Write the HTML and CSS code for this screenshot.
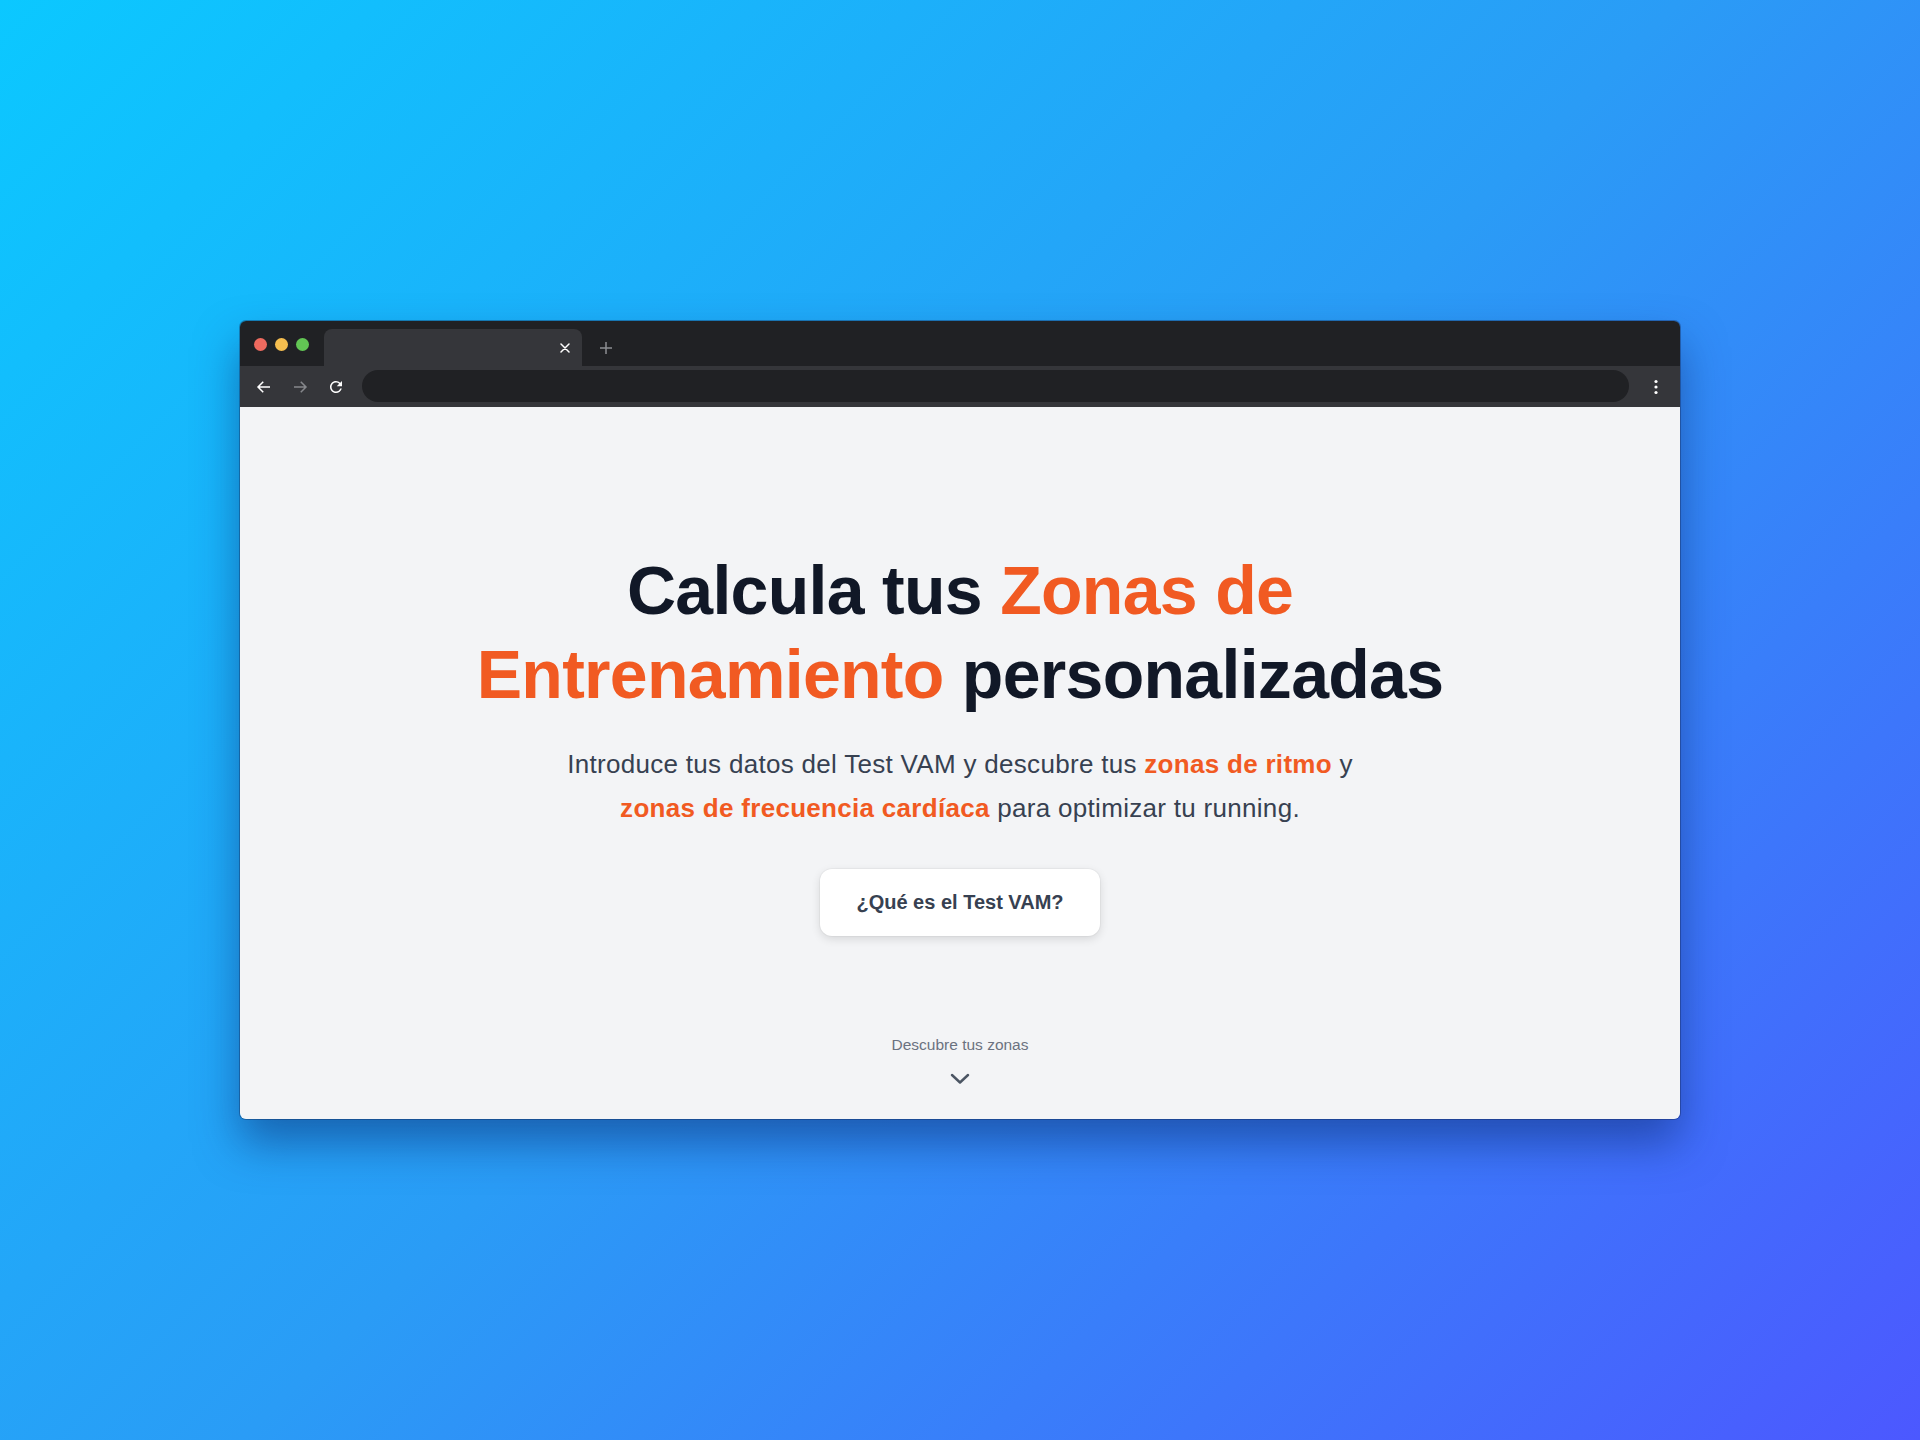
FILE: index.html
```html
<!DOCTYPE html>
<html lang="es">
<head>
<meta charset="utf-8">
<title>Zonas de Entrenamiento</title>
<link rel="stylesheet" href="styles.css">
</head>
<body>
<div class="window">
  <div class="titlebar">
    <div class="lights">
      <span class="light red"></span>
      <span class="light yellow"></span>
      <span class="light green"></span>
    </div>
    <div class="tab">
      <svg class="tab-close" width="10" height="10" viewBox="0 0 10 10"><path d="M1 1L9 9M9 1L1 9" stroke="#ffffff" stroke-width="1.5" stroke-linecap="round"/></svg>
    </div>
    <svg class="new-tab" width="14" height="14" viewBox="0 0 14 14"><path d="M7 1V13M1 7H13" stroke="#8c8e92" stroke-width="1.5"/></svg>
  </div>
  <div class="toolbar">
    <svg class="nav-icon" width="18" height="18" viewBox="0 0 24 24"><path d="M20 12H4M11 5l-7 7 7 7" fill="none" stroke="#ffffff" stroke-width="2"/></svg>
    <svg class="nav-icon" width="18" height="18" viewBox="0 0 24 24"><path d="M4 12h16M13 5l7 7-7 7" fill="none" stroke="#86888c" stroke-width="2"/></svg>
    <svg class="nav-icon" width="18" height="18" viewBox="0 0 24 24"><path fill="#ffffff" d="M17.65 6.35A7.958 7.958 0 0 0 12 4c-4.42 0-7.990 3.58-7.99 8s3.57 8 7.99 8c3.73 0 6.84-2.55 7.73-6h-2.08A5.99 5.99 0 0 1 12 18c-3.310 0-6-2.690-6-6s2.690-6 6-6c1.66 0 3.14.69 4.22 1.78L13 11h7V4l-2.35 2.35z"/></svg>
    <div class="address"></div>
    <svg class="menu" width="4" height="16" viewBox="0 0 4 16"><circle cx="2" cy="2.5" r="1.6" fill="#fff"/><circle cx="2" cy="8" r="1.6" fill="#fff"/><circle cx="2" cy="13.5" r="1.6" fill="#fff"/></svg>
  </div>
  <main class="content">
    <h1 class="title">Calcula tus <span class="accent">Zonas de</span> <span class="accent">Entrenamiento</span> personalizadas</h1>
    <p class="lead">Introduce tus datos del Test VAM y descubre tus <strong class="accent">zonas de ritmo</strong> y <strong class="accent">zonas de frecuencia cardíaca</strong> para optimizar tu running.</p>
    <button class="cta" type="button">¿Qué es el Test VAM?</button>
    <div class="hint">
      <span class="hint-text">Descubre tus zonas</span>
      <svg class="chevron" width="20" height="11" viewBox="0 0 20 11"><path d="M2 2l8 7.5L18 2" fill="none" stroke="#4b5563" stroke-width="2.4" stroke-linecap="round" stroke-linejoin="round"/></svg>
    </div>
  </main>
</div>
</body>
</html>
```

FILE: styles.css
```css
html, body {
  margin: 0;
  padding: 0;
}
body {
  width: 1920px;
  height: 1440px;
  display: flex;
  align-items: center;
  justify-content: center;
  background: linear-gradient(135deg, #0bc8ff 0%, #2a9cf6 50%, #4c58ff 100%);
  font-family: "Liberation Sans", Arial, sans-serif;
}
.window {
  width: 1440px;
  height: 798px;
  display: flex;
  flex-direction: column;
  border-radius: 6px;
  overflow: hidden;
  box-shadow: 0 24px 44px rgba(10, 40, 110, 0.5), 0 0 0 1px rgba(20, 30, 60, 0.35);
}
.titlebar {
  height: 45px;
  background: #202124;
  display: flex;
  align-items: flex-end;
  padding-left: 14px;
  flex-shrink: 0;
}
.lights {
  display: flex;
  gap: 8px;
  align-self: center;
  margin-top: 1px;
}
.light {
  width: 13px;
  height: 13px;
  border-radius: 50%;
}
.red { background: #ee6a5f; }
.yellow { background: #f5be4f; }
.green { background: #62c654; }
.tab {
  width: 258px;
  height: 37px;
  margin-left: 15px;
  background: #35363a;
  border-radius: 8px 8px 0 0;
  display: flex;
  align-items: center;
  justify-content: flex-end;
  padding-right: 12px;
  box-sizing: border-box;
}
.new-tab {
  align-self: center;
  margin-left: 17px;
  margin-top: 8px;
}
.toolbar {
  height: 41px;
  background: #35363a;
  display: flex;
  align-items: center;
  padding: 0 22px 0 15px;
  gap: 18px;
  flex-shrink: 0;
}
.nav-icon {
  display: block;
}
.address {
  flex: 1;
  height: 32px;
  border-radius: 16px;
  background: #202124;
  margin: -1px 7px 0 -1px;
}
.menu {
  display: block;
}
.content {
  flex: 1;
  background: #f3f4f6;
  display: flex;
  flex-direction: column;
  align-items: center;
  padding: 141px 0 35px;
  box-sizing: border-box;
}
.title {
  margin: 0;
  max-width: 1040px;
  text-align: center;
  font-size: 68px;
  line-height: 84px;
  letter-spacing: -0.7px;
  font-weight: 700;
  color: #111827;
}
.accent {
  color: #f15a22;
}
.lead {
  margin: 26px 0 0;
  max-width: 830px;
  text-align: center;
  font-size: 26px;
  line-height: 44px;
  letter-spacing: 0.3px;
  color: #374151;
}
.lead strong {
  font-weight: 700;
}
.cta {
  margin-top: 39px;
  width: 280px;
  height: 67px;
  border: none;
  border-radius: 12px;
  background: #ffffff;
  box-shadow: 0 3px 10px rgba(0, 0, 0, 0.12), 0 0 0 1px rgba(0, 0, 0, 0.03);
  font-family: "Liberation Sans", Arial, sans-serif;
  font-size: 20px;
  font-weight: 700;
  color: #374151;
}
.hint {
  margin-top: auto;
  display: flex;
  flex-direction: column;
  align-items: center;
  gap: 19px;
}
.hint-text {
  font-size: 15.5px;
  line-height: 18px;
  color: #6b7280;
}
.chevron {
  display: block;
}
```
